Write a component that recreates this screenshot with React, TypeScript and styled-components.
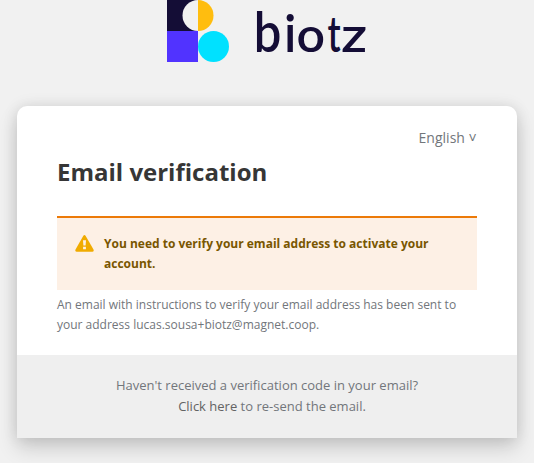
import React from 'react';
import styled, { createGlobalStyle } from 'styled-components';

const GlobalStyle = createGlobalStyle`
  * { box-sizing: border-box; }
  body {
    margin: 0;
    background: #f1f1f1;
    font-family: 'Open Sans', 'Noto Sans', sans-serif;
    color: #72767b;
  }
`;

const Page = styled.div`
  height: 463px;
  overflow: hidden;
  display: flex;
  flex-direction: column;
  align-items: center;
`;

const Header = styled.header`
  height: 106px;
  flex: none;
`;

const Logo = styled.svg`
  display: block;
  overflow: visible;
`;

const Wordmark = styled.text`
  font-family: Lato, sans-serif;
  font-weight: 600;
  font-size: 50px;
  fill: #140d36;
`;

const Card = styled.main`
  width: 500px;
  height: 332px;
  flex: none;
  display: flex;
  flex-direction: column;
  background: #fff;
  border-radius: 10px 10px 0 0;
  box-shadow: 0 10px 20px 0 rgba(3, 3, 3, 0.16), 0 0 15px 0 rgba(3, 3, 3, 0.1);
`;

const Content = styled.div`
  flex: 1;
  padding: 21px 40px 0;
`;

const Locale = styled.button`
  display: block;
  margin-left: auto;
  padding: 0 0.3px 0 0;
  border: 0;
  background: none;
  font: 14px/21px 'Open Sans', sans-serif;
  color: #72767b;

  &::after {
    content: ' \\2c5';
  }
`;

const Title = styled.h1`
  margin: 6px 0 0;
  font-size: 24px;
  line-height: 36px;
  font-weight: 700;
  color: #363636;
`;

const Alert = styled.div`
  height: 74px;
  margin-top: 26px;
  padding: 16px 20px 0 18px;
  display: flex;
  gap: 10px;
  border-top: 2px solid #ec7a08;
  background: #fdf0e5;
`;

const WarningIcon = styled.svg`
  flex: none;
  margin-top: 1px;
`;

const AlertText = styled.p`
  margin: 0;
  font-size: 12px;
  line-height: 20px;
  font-weight: 700;
  color: #795600;
`;

const Instruction = styled.p`
  margin: 5px 0 0;
  font-size: 12px;
  line-height: 20px;
`;

const Footer = styled.footer`
  height: 83px;
  padding-top: 20px;
  background: #efefef;
  font-size: 13px;
  line-height: 21px;
  text-align: center;
`;

const ResendLink = styled.a`
  margin-left: 10px;
  color: #636363;
  text-decoration: none;
`;

const letters = [
  { char: 'b', x: 86.8, scaleX: 0.98, scaleY: 1.11 },
  { char: 'i', x: 117, scaleX: 1, scaleY: 1.05 },
  { char: 'o', x: 129.5, scaleX: 1, scaleY: 0.96 },
  { char: 't', x: 160.5, scaleX: 0.72, scaleY: 0.98 },
  { char: 'z', x: 174, scaleX: 1.15, scaleY: 0.96 },
];

export default function App() {
  return (
    <Page>
      <GlobalStyle />
      <Header>
        <Logo width="200" height="64" viewBox="0 0 200 64" role="img" aria-label="biotz">
          <path d="M0 0H31V31H0Z" fill="#140d36" />
          <path d="M31 0A15.5 15.5 0 0 0 31 31Z" fill="#f1f1f1" />
          <path d="M31 0A15.5 15.5 0 0 1 31 31Z" fill="#ffbd0f" />
          <path d="M0 31H31V62H0Z" fill="#5133ff" />
          <circle cx="46.5" cy="46.5" r="15.5" fill="#00e1ff" />
          {letters.map(({ char, x, scaleX, scaleY }) => (
            <Wordmark key={char} transform={`translate(${x} 51.5) scale(${scaleX} ${scaleY})`}>
              {char}
            </Wordmark>
          ))}
        </Logo>
      </Header>
      <Card>
        <Content>
          <Locale>English</Locale>
          <Title>Email verification</Title>
          <Alert>
            <WarningIcon width="19" height="18" viewBox="0 0 19 18">
              <path
                d="M8.2.9Q9.5-.7 10.7.9L18.5 14.5Q19.1 16.6 17.3 16.8H1.8Q-.1 16.6.5 14.5Z"
                fill="#f0ab00"
              />
              <path d="M8 5.3H11L10.6 10.4H8.4ZM8.1 11.7H10.9V14.2H8.1Z" fill="#fdf0e5" />
            </WarningIcon>
            <AlertText>You need to verify your email address to activate your account.</AlertText>
          </Alert>
          <Instruction>
            {'An email with instructions to verify your email address has been sent to your address lucas.sousa+biotz@magnet.coop.'}
          </Instruction>
        </Content>
        <Footer>
          Haven't received a verification code in your email?
          <br />
          <ResendLink>Click here</ResendLink> to re-send the email.
        </Footer>
      </Card>
    </Page>
  );
}
